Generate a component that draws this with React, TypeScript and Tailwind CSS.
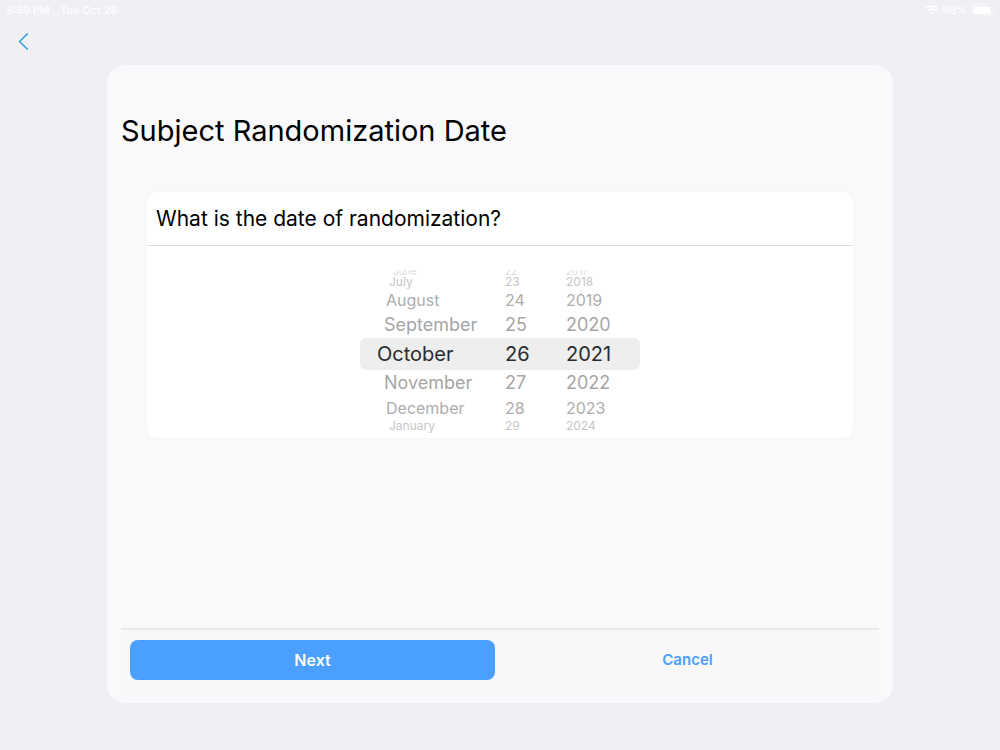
import { useState } from "react";

const MONTHS = [
  "January", "February", "March", "April", "May", "June",
  "July", "August", "September", "October", "November", "December",
];

const ROWS = [
  { offset: -4, row: "h-1.5 items-end overflow-hidden text-[10px] text-[#dedede]", indent: "pl-4" },
  { offset: -3, row: "h-3 text-[12px] text-[#c6c6c6]", indent: "pl-3" },
  { offset: -2, row: "h-6 text-[16px] text-[#adadad]", indent: "pl-[9px]" },
  { offset: -1, row: "h-[26px] text-[18px] text-[#a6a6a6]", indent: "pl-[7px]" },
  { offset: 0, row: "h-8 text-[20px] text-[#2b2b2b]", indent: "pl-0" },
  { offset: 1, row: "h-[26px] text-[18px] text-[#a6a6a6]", indent: "pl-[7px]" },
  { offset: 2, row: "h-6 text-[16px] text-[#adadad]", indent: "pl-[9px]" },
  { offset: 3, row: "h-3 text-[12px] text-[#c6c6c6]", indent: "pl-3" },
];

type WheelProps = {
  label: string;
  valueAt: (offset: number) => string;
  onMove: (offset: number) => void;
  indented?: boolean;
};

function Wheel({ label, valueAt, onMove, indented }: WheelProps) {
  return (
    <div role="group" aria-label={label} className="flex flex-col">
      {ROWS.map(({ offset, row, indent }) => (
        <button
          key={offset}
          type="button"
          aria-pressed={offset === 0}
          onClick={() => onMove(offset)}
          className={`flex items-center text-left leading-none whitespace-nowrap ${row} ${indented ? indent : ""}`}
        >
          {valueAt(offset)}
        </button>
      ))}
    </div>
  );
}

function StatusBar() {
  return (
    <header className="flex h-5 items-center justify-between pr-1 pl-1.5 text-[11px] leading-none font-medium text-white/90">
      <div className="flex gap-2.5">
        <span>5:59 PM</span>
        <span>Tue Oct 26</span>
      </div>
      <div className="flex items-center gap-1">
        <svg width="13" height="10" viewBox="0 0 13 10" fill="none" stroke="white" aria-hidden="true">
          <path d="M.8 3.5a8.1 8.1 0 0 1 11.4 0M2.8 5.7a5.2 5.2 0 0 1 7.4 0" strokeWidth="1.8" />
          <path d="M6.5 9.6 4.6 7.7a2.7 2.7 0 0 1 3.8 0Z" fill="white" stroke="none" />
        </svg>
        <span>96%</span>
        <svg width="25" height="12" viewBox="0 0 25 12" aria-hidden="true">
          <rect x=".5" y=".5" width="21" height="11" rx="3" fill="none" stroke="white" strokeOpacity=".4" />
          <rect x="2" y="2.500" width="17.5" height="7.500" rx="1.5" fill="white" />
          <path d="M23 4v4c1-.3 1.5-1.100 1.500-2S24 4.300 23 4Z" fill="white" fillOpacity=".5" />
        </svg>
      </div>
    </header>
  );
}

export default function App() {
  const [date, setDate] = useState({ month: 9, day: 26, year: 2021 });
  const monthIndex = (offset: number) => (date.month + offset + 12) % 12;
  const dayNumber = (offset: number) => ((date.day - 1 + offset + 31) % 31) + 1;

  return (
    <div className="flex min-h-screen flex-col bg-[#efeff4] font-['Inter',sans-serif] text-black">
      <StatusBar />
      <nav className="flex h-[45px] items-start pt-2.5 pl-3.5">
        <button type="button" aria-label="Back" className="flex size-6 items-center pl-1">
          <svg width="11" height="18" viewBox="0 0 11 18" fill="none" stroke="#1c9be0" strokeWidth="1.300" aria-hidden="true">
            <path d="M9.700 .5 1.500 8.500l8.200 8" />
          </svg>
        </button>
      </nav>

      <main className="mx-[107px] mb-[47px] flex flex-1 flex-col rounded-[18px] bg-[#f9f9fb] px-3.5 pb-3.5">
        <h1 className="pt-12 text-[29px] leading-9">Subject Randomization Date</h1>

        <section
          aria-labelledby="question"
          className="mx-[26px] mt-[43px] mb-10 rounded-lg bg-white shadow-[0_0_1px_rgba(0,0,0,0.12)]"
        >
          <h2 id="question" className="border-b border-[#dcdcde] px-[9px] pt-3 pb-[11px] text-[21px] leading-[30px]">
            What is the date of randomization?
          </h2>
          <div className="flex justify-center pt-6 pb-1.5">
            <div className="grid w-[280px] grid-cols-[128px_61px_1fr]">
              <div className="col-span-3 col-start-1 row-start-1 mt-[68px] h-8 rounded-md bg-[#eeeeee]" />
              <div className="col-start-1 row-start-1 pl-[17px]">
                <Wheel
                  label="Month"
                  indented
                  valueAt={(o) => MONTHS[monthIndex(o)]}
                  onMove={(o) => setDate({ ...date, month: monthIndex(o) })}
                />
              </div>
              <div className="col-start-2 row-start-1 pl-[17px]">
                <Wheel
                  label="Day"
                  valueAt={(o) => String(dayNumber(o))}
                  onMove={(o) => setDate({ ...date, day: dayNumber(o) })}
                />
              </div>
              <div className="col-start-3 row-start-1 pl-[17px]">
                <Wheel
                  label="Year"
                  valueAt={(o) => String(date.year + o)}
                  onMove={(o) => setDate({ ...date, year: date.year + o })}
                />
              </div>
            </div>
          </div>
        </section>

        <footer className="mt-auto grid grid-cols-2 gap-2.5 border-t-2 border-[#e9e9ec] bg-[#f8f8f8] px-[9px] pt-2.5 pb-[9px]">
          <button type="button" className="h-10 rounded-lg bg-[#4a9fff] text-[16px] font-semibold text-white">
            Next
          </button>
          <button type="button" className="h-10 rounded-lg text-[15px] font-semibold text-[#4a9fff]">
            Cancel
          </button>
        </footer>
      </main>
    </div>
  );
}
